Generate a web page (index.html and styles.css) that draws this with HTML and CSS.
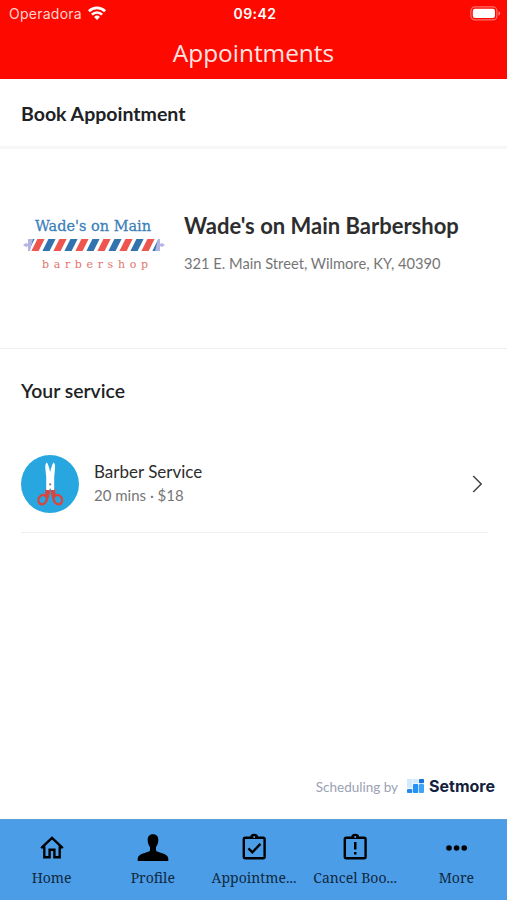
FILE: index.html
```html
<!DOCTYPE html>
<html lang="en">
<head>
    <meta charset="UTF-8">
    <meta name="viewport" content="width=device-width, initial-scale=1.0">
    <title>Appointments</title>
    <link rel="stylesheet" href="styles.css">
</head>
<body>
    <header class="top-bar">
        <div class="status">
            <div class="carrier">
                <span>Operadora</span>
                <svg class="wifi" width="18" height="14" viewBox="0 0 18 14">
                    <g fill="none" stroke="#fff" stroke-width="2.7">
                        <path d="M.9 5.2a11.5 11.5 0 0 1 16.2 0"/>
                        <path d="M3.9 8.6a7.2 7.2 0 0 1 10.2 0"/>
                    </g>
                    <path fill="#fff" d="M9 13.9l-2.9-2.9a4.1 4.1 0 0 1 5.8 0z"/>
                </svg>
            </div>
            <span class="time">09:42</span>
            <svg class="battery" width="31" height="15" viewBox="0 0 31 15">
                <rect x=".9" y=".9" width="26" height="13" rx="4" fill="none" stroke="#ff7068" stroke-width="1.2"/>
                <rect x="2.8" y="2.8" width="22.2" height="9.2" rx="2.2" fill="#fff"/>
                <path d="M28.5 5.3q1.6.6 1.6 2.2t-1.6 2.2z" fill="#ff8a84"/>
            </svg>
        </div>
        <h1 class="title">Appointments</h1>
    </header>

    <main class="content">
        <h2 class="page-heading">Book Appointment</h2>

        <section class="business">
            <svg class="business-logo" width="143" height="62" viewBox="0 0 143 62">
                <defs>
                    <clipPath id="pole"><rect x="7" y="25" width="128" height="12"/></clipPath>
                </defs>
                <text class="logo-name" x="12" y="17" textLength="116" lengthAdjust="spacingAndGlyphs">Wade's on Main</text>
                <g clip-path="url(#pole)" stroke-width="6.4">
                    <path stroke="#3272ae" d="M1 39L9 23M22 39L30 23M44 39L52 23M66 39L74 23M88 39L96 23M110 39L118 23M132 39L140 23"/>
                    <path stroke="#ee554f" d="M11 39L19 23M33 39L41 23M55 39L63 23M77 39L85 23M99 39L107 23M121 39L129 23"/>
                </g>
                <path fill="#b4b4e3" d="M0 31l3-2 2 1v-5h5L7 37H5v-5l-2 1zM142 31l-3-2-2 1v-5h-2l-3 12h5v-5l2 1z"/>
                <text class="logo-sub" x="19" y="54" textLength="106" lengthAdjust="spacing">barbershop</text>
            </svg>
            <div>
                <h3 class="business-name">Wade's on Main Barbershop</h3>
                <p class="business-address">321 E. Main Street, Wilmore, KY, 40390</p>
            </div>
        </section>

        <section class="services">
            <h2 class="services-heading">Your service</h2>
            <a class="service" href="#">
                <svg class="service-icon" width="58" height="58" viewBox="0 0 58 58">
                    <circle cx="29" cy="29" r="29" fill="#28a6df"/>
                    <path fill="#d9453f" d="M24.8 33.5h3.6l.6 4-1.8 7-3.6-3zM30.2 33.5h3.6l1.2 8-3.6 3-1.8-7z"/>
                    <path fill="#fff" d="M25.5 7.5q1.5 0 3.7 9.5 2.2-9.5 3.7-9.5 1.4 2 1.2 5L33.2 22v13h-3l-1-2-1 2h-3V22l-.9-9.5q-.2-3 1.2-5z"/>
                    <g fill="none" stroke="#d9453f" stroke-width="2.4">
                        <ellipse cx="21.6" cy="44.6" rx="4" ry="4.8" transform="rotate(28 21.6 44.6)"/>
                        <ellipse cx="36.9" cy="44.6" rx="4" ry="4.8" transform="rotate(-28 36.9 44.6)"/>
                    </g>
                    <circle cx="29.2" cy="29.3" r="1.1" fill="#777"/>
                </svg>
                <div class="service-info">
                    <p class="service-name">Barber Service</p>
                    <p class="service-detail">20 mins · $18</p>
                </div>
                <svg class="chevron" width="11" height="18" viewBox="0 0 11 18">
                    <path d="M1.2 1l8 8-8 8" fill="none" stroke="#444" stroke-width="1.5"/>
                </svg>
            </a>
        </section>

        <div class="powered">
            <span class="powered-label">Scheduling by</span>
            <svg width="17" height="14" viewBox="0 0 16 14" preserveAspectRatio="none">
                <path fill="#d3e9fd" d="M0 0h5v9H0zM5.5 0h5v4.500h-5z"/>
                <rect y="10" width="5" height="4" rx="1" fill="#2488ee"/>
                <rect x="5.6" y="5" width="5" height="9" rx="1" fill="#2491f5"/>
                <rect x="11.2" width="4.8" height="4.3" rx="1" fill="#1672d5"/>
                <rect x="11.2" y="5" width="4.8" height="9" rx="1" fill="#41a3f7"/>
            </svg>
            <span class="setmore">Setmore</span>
        </div>
    </main>

    <nav class="tabs">
        <a class="tab" href="#">
            <svg width="32" height="30" viewBox="0 0 32 30">
                <path d="M5.2 15.2L16 5l10.8 10.2M8.3 13.5v10.8h5.3v-7.6h4.8v7.6h5.3V13.5" fill="none" stroke="#000" stroke-width="2.4"/>
            </svg>
            <span>Home</span>
        </a>
        <a class="tab" href="#">
            <svg width="32" height="30" viewBox="0 0 32 30">
                <path d="M16 1.3c3.7 0 5.5 2.5 5.3 6-.1 3.3-1.3 5.6-2.3 6.7v3.5c0 2 12.3 2.5 12.3 8V28H.7v-2.5c0-5.5 12.3-6 12.3-8V14c-1-1.100-2.200-3.400-2.300-6.700-.2-3.500 1.600-6 5.300-6z"/>
            </svg>
            <span>Profile</span>
        </a>
        <a class="tab" href="#">
            <svg width="32" height="30" viewBox="0 0 32 30">
                <rect x="5.8" y="4.7" width="20.8" height="20.6" rx="1.5" fill="none" stroke="#000" stroke-width="2.4"/>
                <path d="M12.2 4.5a4 3.7 0 0 1 8 0z"/>
                <circle cx="16.2" cy="3.9" r="1" fill="#4b9de7"/>
                <path d="M10.4 15.3l4 4 8-8.4" fill="none" stroke="#000" stroke-width="2.4"/>
            </svg>
            <span>Appointme...</span>
        </a>
        <a class="tab" href="#">
            <svg width="32" height="30" viewBox="0 0 32 30">
                <rect x="5.8" y="4.7" width="20.8" height="20.6" rx="1.5" fill="none" stroke="#000" stroke-width="2.4"/>
                <path d="M12.2 4.5a4 3.7 0 0 1 8 0z"/>
                <circle cx="16.2" cy="3.9" r="1" fill="#4b9de7"/>
                <path d="M15 9h2.500v7.600H15zM15 19h2.500v2.500H15z"/>
            </svg>
            <span>Cancel Boo...</span>
        </a>
        <a class="tab" href="#">
            <svg width="32" height="30" viewBox="0 0 32 30">
                <circle cx="9" cy="15" r="2.8"/>
                <circle cx="16.6" cy="15" r="2.8"/>
                <circle cx="24.2" cy="15" r="2.8"/>
            </svg>
            <span>More</span>
        </a>
    </nav>
</body>
</html>
```
FILE: styles.css
```css
* {
    box-sizing: border-box;
}
body {
    margin: 0;
    height: 900px;
    display: flex;
    flex-direction: column;
    font-family: Lato, "Liberation Sans", sans-serif;
    background-color: #fff;
    overflow: hidden;
}
h1, h2, h3, p {
    margin: 0;
}
a {
    color: inherit;
    text-decoration: none;
}
svg {
    display: block;
    flex: none;
}
.top-bar {
    height: 79px;
    flex: none;
    background-color: #fd0900;
    color: #fff;
}
.status {
    display: grid;
    grid-template-columns: 1fr auto 1fr;
    align-items: center;
    height: 27px;
    padding: 0 6px 0 9px;
}
.carrier {
    display: flex;
    align-items: center;
    gap: 6px;
    font-family: Inter, sans-serif;
    font-size: 14px;
    letter-spacing: 0.25px;
    color: #ffd4d0;
}
.wifi {
    margin-top: -2px;
}
.time {
    font-family: Inter, sans-serif;
    font-size: 14px;
    font-weight: 600;
    letter-spacing: 0.5px;
}
.battery {
    justify-self: end;
}
.title {
    font-family: "Open Sans", sans-serif;
    font-size: 24.4px;
    font-weight: 400;
    line-height: 52px;
    text-align: center;
    color: #ffe4e1;
}
.content {
    flex: 1;
    display: flex;
    flex-direction: column;
}
.page-heading {
    height: 70px;
    padding-left: 21px;
    border-bottom: 3px solid #f7f7f7;
    font-size: 19.5px;
    font-weight: 700;
    line-height: 69px;
    color: #202124;
}
.business {
    display: flex;
    align-items: center;
    gap: 18px;
    height: 200px;
    padding: 0 20px 12px 23px;
    border-bottom: 1px solid #f0f0f0;
}
.business-logo {
    margin-top: 5px;
}
.logo-name {
    font-family: "DejaVu Serif", serif;
    font-size: 15px;
    fill: #3c7fb9;
    stroke: #3c7fb9;
    stroke-width: 0.3;
}
.logo-sub {
    font-family: "DejaVu Serif", serif;
    font-size: 11px;
    fill: #e2736d;
}
.business-name {
    font-size: 22px;
    font-weight: 700;
    line-height: 30px;
    color: #2d2d2d;
}
.business-address {
    margin-top: 11px;
    font-size: 14.7px;
    line-height: 22px;
    color: #767676;
}
.services {
    padding: 28px 19px 0 21px;
}
.services-heading {
    font-size: 19.4px;
    font-weight: 600;
    line-height: 28px;
    color: #202124;
}
.service {
    display: flex;
    align-items: center;
    gap: 15px;
    margin-top: 30px;
    height: 98px;
    border-bottom: 1px solid #f0f0f0;
}
.service-info {
    flex: 1;
    margin-top: -2px;
}
.service-name {
    font-size: 17px;
    line-height: 25px;
    color: #2d2d2d;
}
.service-detail {
    font-size: 15px;
    line-height: 23px;
    color: #767676;
}
.chevron {
    margin-right: 5px;
}
.powered {
    display: flex;
    align-items: center;
    justify-content: flex-end;
    margin-top: auto;
    height: 67px;
    padding-right: 12px;
}
.powered-label {
    margin: 3px 9px 0 0;
    font-size: 13.5px;
    color: #9ba1b5;
}
.setmore {
    margin-left: 5px;
    font-family: Inter, sans-serif;
    font-size: 16px;
    font-weight: 700;
    color: #14213d;
}
.tabs {
    display: grid;
    grid-template-columns: repeat(5, 1fr);
    height: 81px;
    flex: none;
    padding-left: 1px;
    border-top: 1px solid #5a9fdc;
    background-color: #4b9de7;
}
.tab {
    display: flex;
    flex-direction: column;
    align-items: center;
    padding-top: 13px;
    font-family: "Noto Serif", "Liberation Serif", serif;
    font-size: 14px;
    line-height: 29px;
    white-space: nowrap;
    color: #10293f;
}
```
